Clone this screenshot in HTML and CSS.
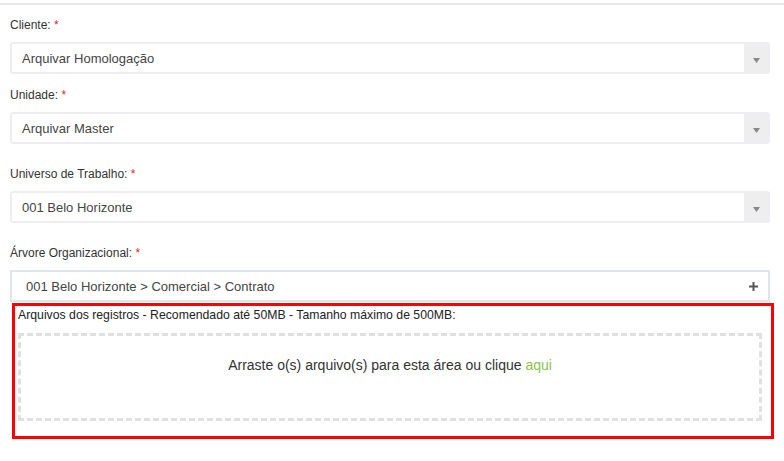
FILE: index.html
```html
<!DOCTYPE html>
<html lang="pt-BR">
<head>
<meta charset="utf-8">
<link rel="stylesheet" href="styles.css">
</head>
<body>
<div class="topline"></div>
<form class="form">
  <div class="group g1">
    <label class="lbl">Cliente: <span class="req">*</span></label>
    <div class="select"><span class="val">Arquivar Homologação</span><span class="arrow"><svg width="7" height="5" viewBox="0 0 7 5"><path d="M0 0H7L3.5 5Z" fill="#888"/></svg></span></div>
  </div>
  <div class="group g2">
    <label class="lbl">Unidade: <span class="req">*</span></label>
    <div class="select"><span class="val">Arquivar Master</span><span class="arrow"><svg width="7" height="5" viewBox="0 0 7 5"><path d="M0 0H7L3.5 5Z" fill="#888"/></svg></span></div>
  </div>
  <div class="group g3">
    <label class="lbl">Universo de Trabalho: <span class="req">*</span></label>
    <div class="select"><span class="val">001 Belo Horizonte</span><span class="arrow"><svg width="7" height="5" viewBox="0 0 7 5"><path d="M0 0H7L3.5 5Z" fill="#888"/></svg></span></div>
  </div>
  <div class="group g4">
    <label class="lbl">Árvore Organizacional: <span class="req">*</span></label>
    <div class="tree"><span class="tval">001 Belo Horizonte &gt; Comercial &gt; Contrato</span><svg class="plus" width="9" height="9" viewBox="0 0 9 9"><path d="M3.5 0h2v3.5H9v2H5.5V9h-2V5.5H0v-2h3.5z" fill="#555"/></svg></div>
  </div>
  <div class="upload">
    <div class="upl-label">Arquivos dos registros - Recomendado até 50MB - Tamanho máximo de 500MB:</div>
    <div class="drop"><span class="drop-text">Arraste o(s) arquivo(s) para esta área ou clique <a class="here">aqui</a></span></div>
  </div>
</form>
</body>
</html>
```
FILE: styles.css
```css
html, body { margin: 0; padding: 0; background: #fff; }
body { font-family: "Liberation Sans", Arial, sans-serif; color: #333; width: 784px; height: 461px; overflow: hidden; }
.topline { height: 2px; background: #e6e6e6; margin-top: 3px; }
.form { display: flex; flex-direction: column; padding: 0 14px 0 10px; }
.group { display: flex; flex-direction: column; }
.g1 { margin-top: 12px; }
.g2 { margin-top: 13px; }
.g3 { margin-top: 22px; }
.g4 { margin-top: 22px; }
.lbl { font-size: 12px; line-height: 16px; height: 16px; margin-bottom: 9px; color: #333; }
.req { color: #e2261d; }
.select { height: 32px; box-sizing: border-box; border: 2px solid #eceef1; border-radius: 3px; display: flex; align-items: stretch; }
.val { flex: 1; font-size: 13px; color: #444; padding-left: 10px; display: flex; align-items: center; }
.arrow { width: 24px; background: #eeeeee; display: flex; align-items: center; justify-content: center; padding-top: 4px; }
.tree { height: 32px; box-sizing: border-box; border: 2px solid #e1e4e8; display: flex; align-items: center; }
.tval { flex: 1; font-size: 13px; color: #444; padding-left: 14px; }
.plus { margin-right: 10px; }
.upload { margin: 1px -4px 0 2px; border: 3px solid #ff0000; padding: 2px 9px 15px 3px; }
.upl-label { font-size: 12.25px; line-height: 14px; color: #222; }
.drop { margin-top: 11px; height: 58px; border: 3px dashed #e0e0e0; display: flex; align-items: center; justify-content: center; font-size: 14px; color: #333; padding-bottom: 24px; }
.here { color: #8cc152; }
```
